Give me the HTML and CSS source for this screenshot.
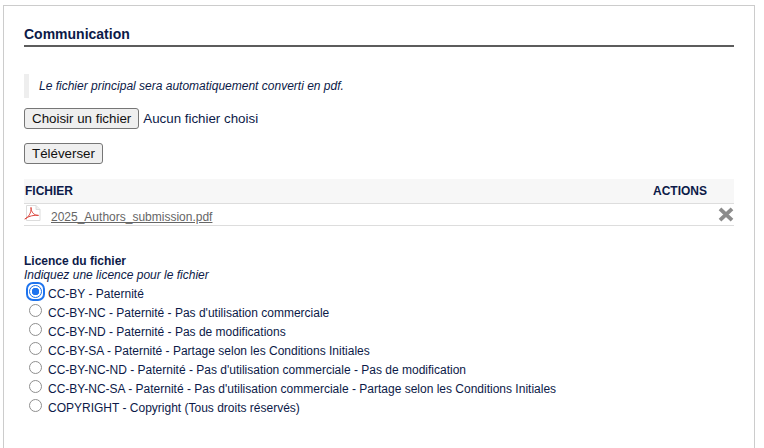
FILE: index.html
```html
<!DOCTYPE html>
<html lang="fr">
<head>
  <meta charset="UTF-8" />
  <title>Communication</title>
  <link rel="stylesheet" href="styles.css">
</head>
<body>
  <div class="panel">
    <h2 class="title">Communication</h2>
    <p class="note">Le fichier principal sera automatiquement converti en pdf.</p>
    <div class="file-pick">
      <button type="button" class="btn">Choisir un fichier</button>
      <span>Aucun fichier choisi</span>
    </div>
    <button type="button" class="btn upload">Téléverser</button>

    <div class="table-head">
      <span>FICHIER</span>
      <span class="actions">ACTIONS</span>
    </div>
    <div class="table-row">
      <svg class="pdf" width="17" height="17" viewBox="0 0 17 17">
        <path d="M2.5 .5H12L16 4.5V15.5H2.5Z" fill="#fff" stroke="#dcdcdc"/>
        <path d="M12 .5V4.5H16" fill="#f0f0f0" stroke="#dcdcdc"/>
        <path d="M.8 14C4 12.8 7.6 8 7 2.4 7.2 7.4 10 10.4 14.5 10.4 10.4 9.8 4.4 11 .8 14Z" fill="none" stroke="#dd4a42" stroke-width="1"/>
      </svg>
      <a class="file-link" href="#">2025_Authors_submission.pdf</a>
      <svg class="del" width="16" height="15" viewBox="0 0 16 15">
        <path d="M2 1.8L14 13.2M14 1.8L2 13.2" stroke="#8c8c8c" stroke-width="3.8" fill="none"/>
      </svg>
    </div>

    <div class="licence">
      <div class="licence-title">Licence du fichier</div>
      <div class="licence-hint">Indiquez une licence pour le fichier</div>
      <label class="opt"><input type="radio" name="lic" class="radio focus" checked>CC-BY - Paternité</label>
      <label class="opt"><input type="radio" name="lic" class="radio">CC-BY-NC - Paternité - Pas d'utilisation commerciale</label>
      <label class="opt"><input type="radio" name="lic" class="radio">CC-BY-ND - Paternité - Pas de modifications</label>
      <label class="opt"><input type="radio" name="lic" class="radio">CC-BY-SA - Paternité - Partage selon les Conditions Initiales</label>
      <label class="opt"><input type="radio" name="lic" class="radio">CC-BY-NC-ND - Paternité - Pas d'utilisation commerciale - Pas de modification</label>
      <label class="opt"><input type="radio" name="lic" class="radio">CC-BY-NC-SA - Paternité - Pas d'utilisation commerciale - Partage selon les Conditions Initiales</label>
      <label class="opt"><input type="radio" name="lic" class="radio">COPYRIGHT - Copyright (Tous droits réservés)</label>
    </div>
  </div>
</body>
</html>
```
FILE: styles.css
```css
html, body {
  height: 100%;
}

body {
  margin: 0;
  background: #fff;
  color: #0c1a48;
  font-family: "Liberation Sans", Arial, sans-serif;
  font-size: 12px;
  overflow: hidden;
}

.panel {
  box-sizing: border-box;
  width: 752px;
  height: 448px;
  margin: 5px 0 0 3px;
  padding: 20px 20px 0 20px;
  border: 1px solid #ccc;
  border-bottom: none;
}

.title {
  margin: 0;
  height: 19px;
  border-bottom: 2px solid #5c5c5c;
  font-size: 14px;
  line-height: 16px;
  font-weight: bold;
}

.note {
  margin: 27px 0 0;
  height: 24px;
  padding-left: 10px;
  border-left: 5px solid #eee;
  font-style: italic;
  line-height: 24px;
}

.file-pick {
  display: flex;
  align-items: center;
  gap: 4px;
  margin-top: 10px;
  font-size: 13.33px;
}

.btn {
  box-sizing: border-box;
  height: 21px;
  padding: 0 7px;
  background: #efefef;
  border: 1px solid #767676;
  border-radius: 3px;
  color: #111;
  font-family: inherit;
  font-size: 13.33px;
}

.upload {
  display: block;
  margin-top: 14px;
}

.table-head {
  display: flex;
  justify-content: space-between;
  height: 24px;
  margin-top: 15px;
  padding: 0 1px;
  background: #f7f7f7;
  border-bottom: 1px solid #ddd;
  font-weight: bold;
  line-height: 24px;
}

.actions {
  margin-right: 26px;
}

.table-row {
  display: flex;
  align-items: flex-start;
  height: 21px;
  border-bottom: 1px solid #ddd;
}

.pdf {
  margin-top: 1px;
}

.file-link {
  margin: 6px 0 0 10px;
  color: #666;
  line-height: 14px;
}

.del {
  margin: 3px 0 0 auto;
}

.licence {
  margin-top: 28px;
}

.licence-title {
  font-weight: bold;
  line-height: 14px;
}

.licence-hint {
  margin-bottom: 2px;
  font-style: italic;
  line-height: 14px;
}

.opt {
  display: flex;
  align-items: center;
  height: 19px;
}

.radio {
  appearance: none;
  position: relative;
  box-sizing: border-box;
  width: 13px;
  height: 13px;
  margin: 0 6px 4px 5px;
  background: #fff;
  border: 1px solid #8f8f8f;
  border-radius: 50%;
  flex: none;
}

.radio.focus {
  border-color: #1a6fe8;
  background: radial-gradient(circle, #1f74ee 0 3.5px, #fff 4px);
  outline: none;
}

.radio.focus::before {
  content: "";
  position: absolute;
  inset: -4px;
  border: 2.5px solid #1f74ee;
  border-radius: 7px;
}
```
